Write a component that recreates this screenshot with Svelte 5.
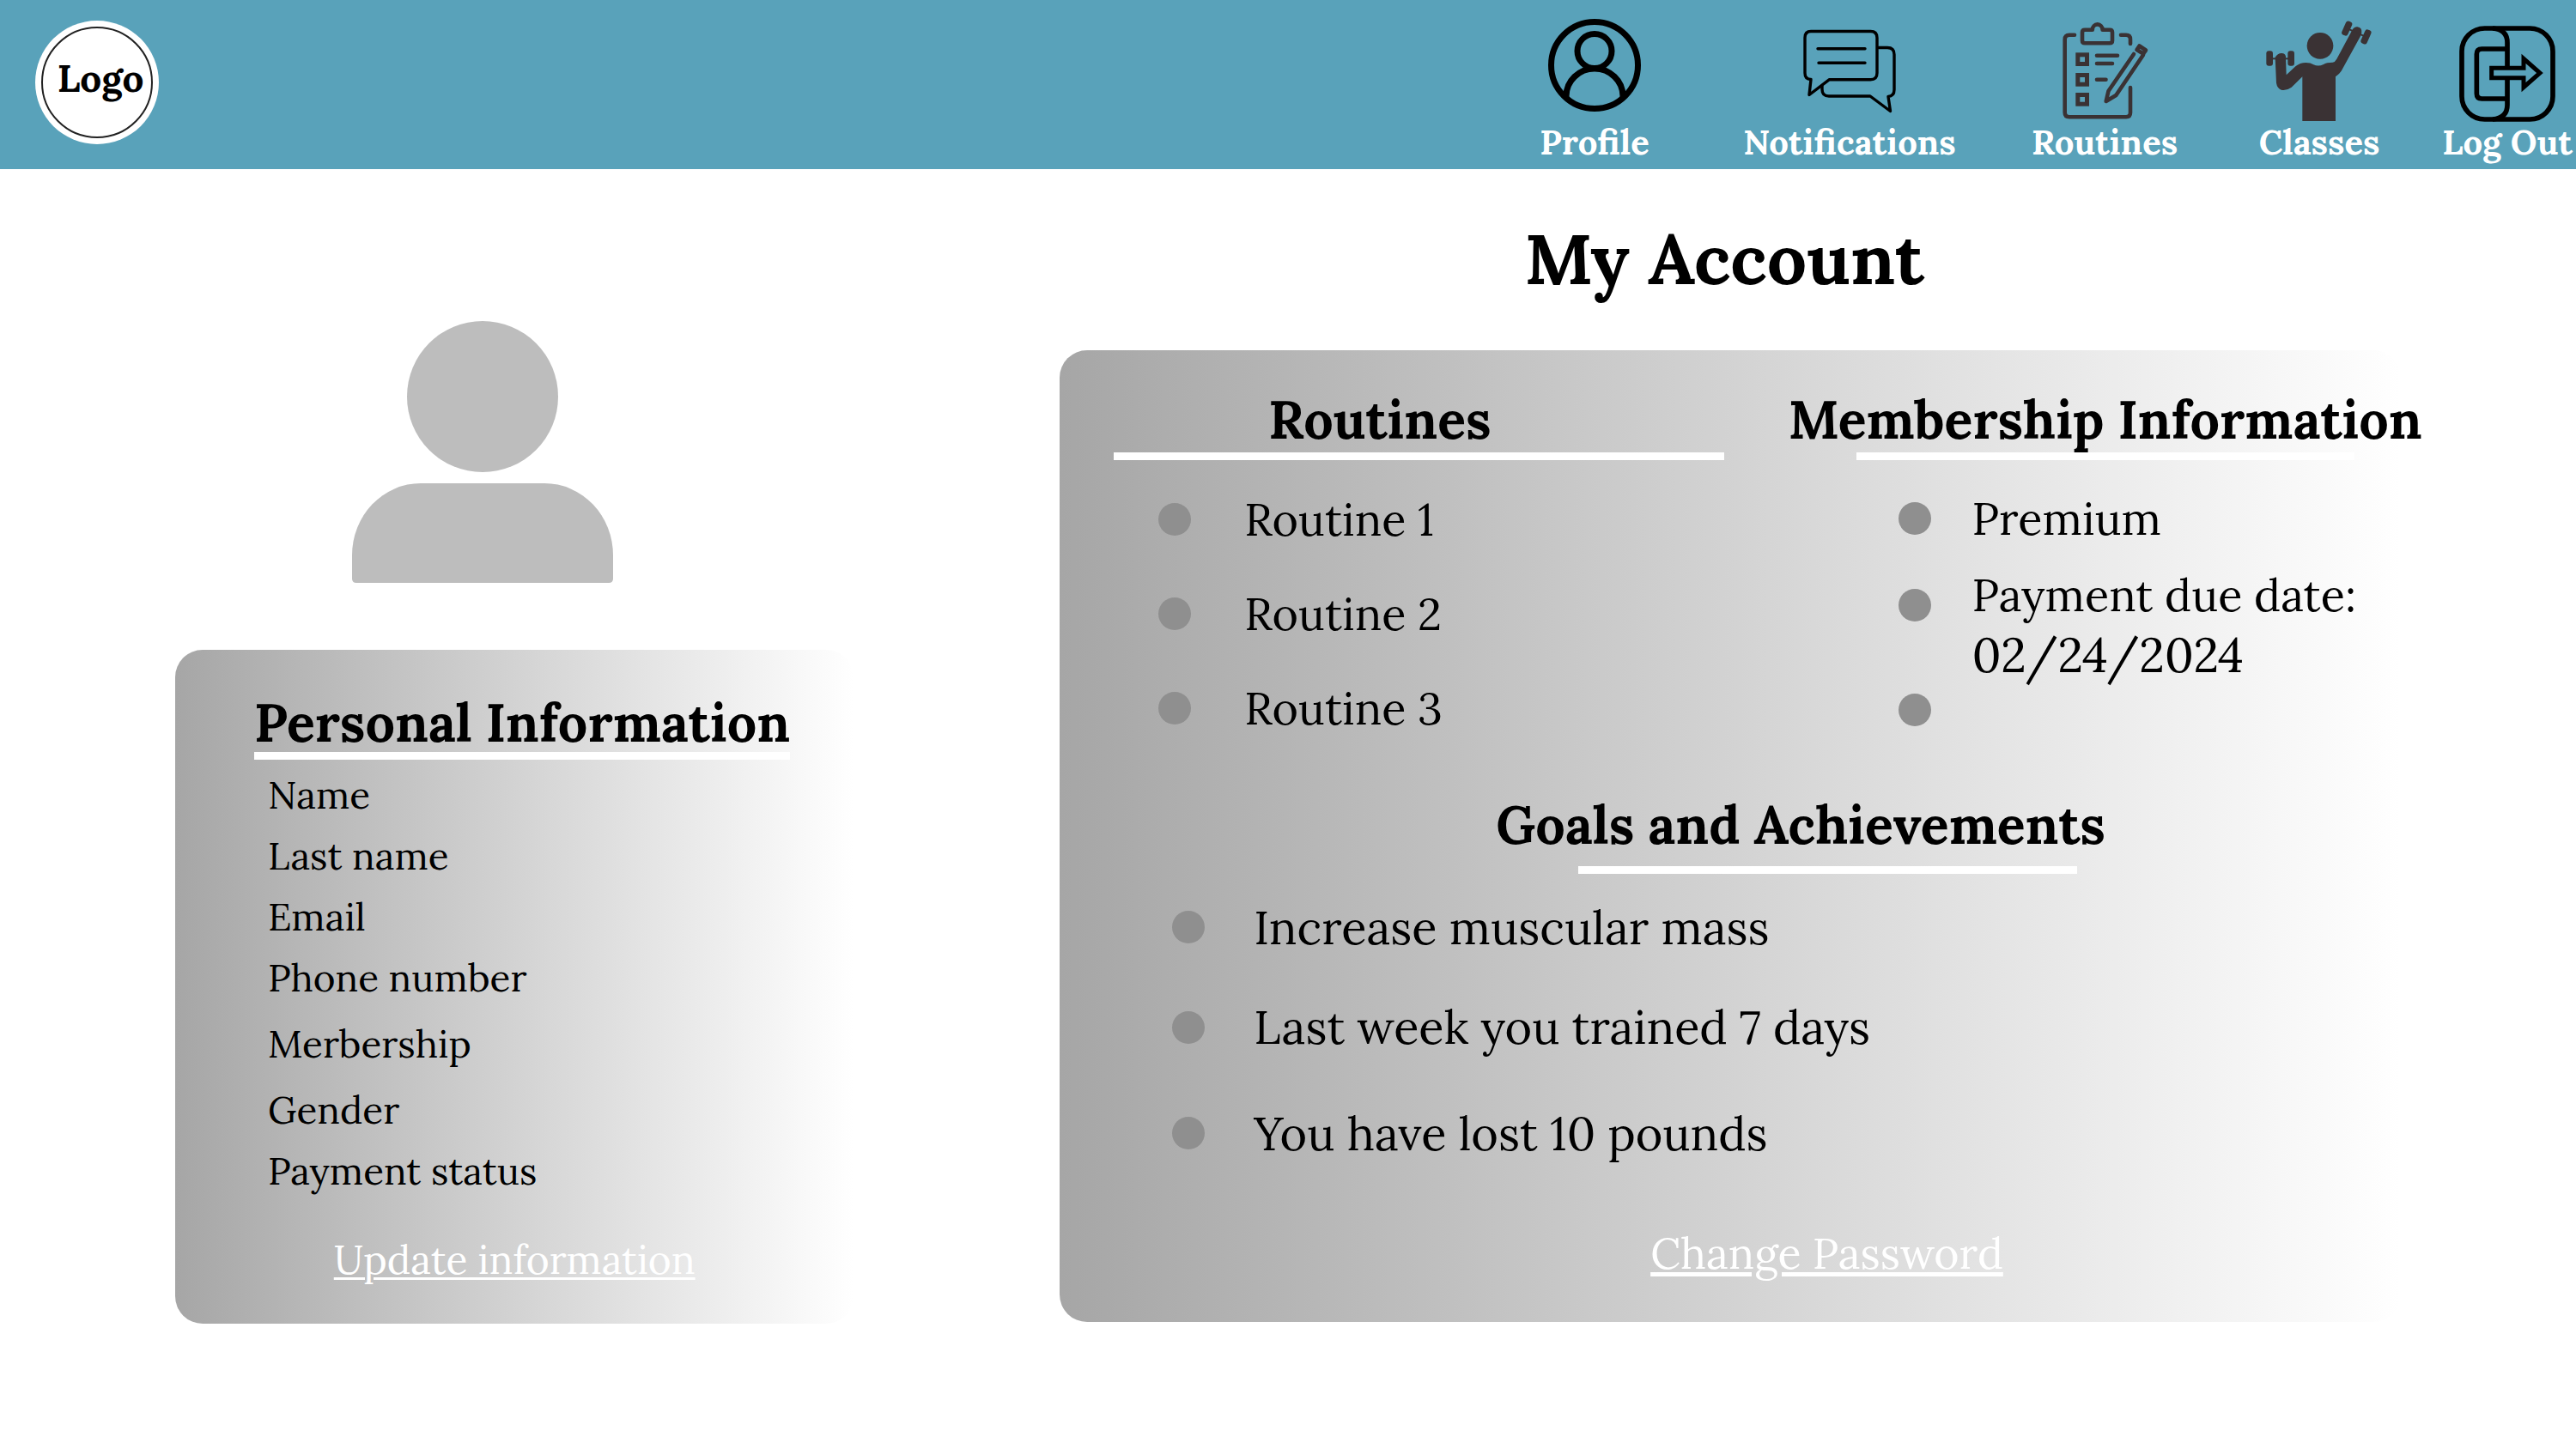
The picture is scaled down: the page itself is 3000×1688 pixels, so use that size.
<script>
  const personalFields = [
    { label: 'Name' },
    { label: 'Last name' },
    { label: 'Email' },
    { label: 'Phone number' },
    { label: 'Merbership', roomy: true },
    { label: 'Gender', roomy: true },
    { label: 'Payment status' }
  ];
  const routines = ['Routine 1', 'Routine 2', 'Routine 3'];
  const goals = [
    'Increase muscular mass',
    'Last week you trained 7 days',
    'You have lost 10 pounds'
  ];
</script>

<header class="topbar">
  <a class="logo" href="#home"><span>Logo</span></a>

  <nav class="menu" aria-label="Main">
    <a href="#profile">
      <svg viewBox="0 0 130 120" fill="none" stroke="#000" stroke-width="7" aria-hidden="true">
        <circle cx="65" cy="54" r="50.5" />
        <circle cx="65" cy="37.5" r="20" />
        <path d="M32 93v-3a33 32 0 0 1 66 0v3" />
      </svg>
      <span>Profile</span>
    </a>
    <a href="#notifications">
      <svg viewBox="0 0 130 120" fill="none" stroke="#000" stroke-width="3.4" stroke-linecap="round" stroke-linejoin="round" aria-hidden="true">
        <path d="M20 14.5H89.500q7.500 0 7.500 7.500v41q0 7.700-7.500 7.700H41.500L18 88.500 20 70.500q-7 0-7-7.500V22q0-7.500 7-7.500z" />
        <path d="M28 34.700H83M29 51.300H83" />
        <path d="M99 33.500h10q8 0 8 8v41q0 7.500-7 8l2.500 17L89 90H41q-8 0-8-8v-4" />
      </svg>
      <span>Notifications</span>
    </a>
    <a href="#routines">
      <svg viewBox="0 0 130 120" fill="none" stroke="#3a3234" stroke-width="4.600" stroke-linecap="round" stroke-linejoin="round" aria-hidden="true">
        <path d="M30 18.700H24q-5.300 0-5.300 5.300V109q0 5.300 5.300 5.300H90q5 0 5-5V80" />
        <path d="M84 18.700h6q5 0 5 5V29" />
        <path d="M50.800 12.700H42q-3 0-3 3v9.600q0 3 3 3h29q3 0 3-3v-9.600q0-3-3-3h-8.400a5.900 6.300 0 0 0-11.800 0z" />
        <g stroke-width="5" stroke-linejoin="miter">
          <rect x="33.800" y="41.800" width="10.700" height="10.700" />
          <rect x="33.800" y="65.500" width="10.700" height="10.700" />
          <rect x="33.800" y="88.500" width="10.700" height="10.700" />
        </g>
        <path d="M56 42.700H80M56 52H74M56 70.700H66.500" />
        <path d="M99 41 69.500 84 66.700 96l11.600-7L110 42" />
        <path d="M105.500 31.500 113 36.500 110 40.500 102.500 36z" />
      </svg>
      <span>Routines</span>
    </a>
    <a href="#classes">
      <svg viewBox="110 66 390 360" fill="#3a3234" aria-hidden="true">
        <circle cx="308" cy="160" r="46" />
        <path d="M246 423V268L208 305Q190 318 172 314 158 308 155 290L151 200Q160 185 175 186 190 188 188 203L190 262 222 232Q238 219 258 219 275 219 285 226 302 234 320 225 330 218 352 218 360 217 366 206L415 115Q424 92 438 94 455 96 453 114 452 120 448 128L382 248Q374 260 362 268V423z" />
        <rect x="120" y="178" width="23" height="52" rx="9" />
        <rect x="195" y="178" width="23" height="52" rx="9" />
        <rect x="140" y="202" width="58" height="6" />
        <g transform="rotate(24 435 114)">
          <rect x="387" y="88" width="23" height="52" rx="9" />
          <rect x="460" y="88" width="23" height="52" rx="9" />
          <rect x="405" y="111" width="60" height="6" />
        </g>
      </svg>
      <span>Classes</span>
    </a>
    <a href="#logout">
      <svg viewBox="771 66 390 360" fill="none" stroke="#000" stroke-width="17" aria-hidden="true">
        <rect x="807" y="99" width="318" height="318" rx="80" />
        <path d="M915 99q51 4 51 50V237M966 272V367q0 46-51 50" />
        <path d="M966 171H877q-18 0-18 18V327q0 18 18 18H966" />
        <path d="M911 237.500H1023V205L1080 255 1023 305V272H911z" stroke-width="15" />
      </svg>
      <span>Log Out</span>
    </a>
  </nav>
</header>

<main class="page">
  <section class="profile">
    <svg class="avatar" viewBox="0 0 304 305" fill="#bdbdbd" role="img" aria-label="Profile picture">
      <circle cx="152" cy="88" r="88" />
      <path d="M80 189H224A80 84 0 0 1 304 273V300Q304 305 299 305H5Q0 305 0 300V273A80 84 0 0 1 80 189z" />
    </svg>

    <div class="card personal">
      <h2>Personal Information</h2>
      <ul class="fields">
        {#each personalFields as field}
          <li class:roomy={field.roomy}>{field.label}</li>
        {/each}
      </ul>
      <a class="update" href="#update">Update information</a>
    </div>
  </section>

  <section class="account">
    <h1>My Account</h1>

    <div class="card overview">
      <div class="columns">
        <section class="routines">
          <h2>Routines</h2>
          <ul class="bullets">
            {#each routines as routine}
              <li>{routine}</li>
            {/each}
          </ul>
        </section>

        <section class="membership">
          <h2>Membership Information</h2>
          <ul class="bullets">
            <li>Premium</li>
            <li>
              <div>
                Payment due date:
                <time datetime="2024-02-24">02/24/2024</time>
              </div>
            </li>
            <li></li>
          </ul>
        </section>
      </div>

      <section class="goals">
        <h2>Goals and Achievements</h2>
        <ul class="bullets">
          {#each goals as goal}
            <li>{goal}</li>
          {/each}
        </ul>
      </section>

      <a class="password" href="#password">Change Password</a>
    </div>
  </section>
</main>

<style>
  :global(body) {
    margin: 0;
    background: #fff;
    color: #000;
    font-family: Lora, 'Liberation Serif', serif;
  }

  h1,
  h2,
  ul {
    margin: 0;
    padding: 0;
  }

  ul {
    list-style: none;
  }

  .topbar {
    display: flex;
    justify-content: space-between;
    align-items: flex-start;
    background: #59a2ba;
  }

  .logo {
    display: flex;
    box-sizing: border-box;
    width: 144px;
    height: 144px;
    margin: 24px 0 0 41px;
    padding: 7px;
    border-radius: 50%;
    background: #fff;
    color: #000;
    font-size: 44px;
    font-weight: 700;
    line-height: 52px;
    text-decoration: none;
  }

  .logo span {
    display: flex;
    flex: 1;
    align-items: center;
    justify-content: center;
    padding: 0 0 10px 8px;
    border: 2px solid #222;
    border-radius: 50%;
  }

  .menu {
    display: grid;
    grid-template-columns: 222fr 372fr 222fr 278fr 160fr;
    width: 41.8%;
    padding: 22px 0 7px;
  }

  .menu a {
    display: flex;
    flex-direction: column;
    align-items: center;
    color: #fff;
    font-size: 40px;
    font-weight: 700;
    line-height: 48px;
    text-decoration: none;
    white-space: nowrap;
  }

  .menu svg {
    width: 130px;
    height: 120px;
  }

  .page {
    display: grid;
    grid-template-columns: minmax(0, 790fr) minmax(0, 1561fr);
    column-gap: 9.25%;
    align-items: start;
    padding: 0 6.8%;
  }

  .profile {
    padding-top: 177px;
  }

  .avatar {
    display: block;
    width: 304px;
    height: 305px;
    margin: 0 0 78px 26%;
  }

  .card {
    border-radius: 32px;
    background: linear-gradient(90deg, #a6a6a6, #fff);
  }

  h1 {
    margin-bottom: 59px;
    padding-right: 14px;
    font-size: 82px;
    line-height: 96px;
    text-align: center;
  }

  h2 {
    font-size: 61px;
    line-height: 68px;
    white-space: nowrap;
  }

  h2::after {
    content: '';
    display: block;
    height: 9px;
    background: #fff;
  }

  .personal {
    display: flex;
    flex-direction: column;
    align-items: flex-start;
    padding: 51px 0 42px;
  }

  .personal h2 {
    margin-left: 92px;
  }

  .fields {
    padding: 6px 0 36px 108px;
    font-size: 44px;
    line-height: 71px;
  }

  .roomy {
    padding-top: 6px;
  }

  .update,
  .password {
    color: #fff;
    text-decoration: underline;
  }

  .update {
    align-self: center;
    font-size: 46px;
    line-height: 64px;
    text-decoration-thickness: 3px;
    text-underline-offset: 4px;
  }

  .account {
    padding-top: 56px;
  }

  .overview {
    padding: 47px 0 45px;
  }

  .columns {
    display: grid;
    grid-template-columns: minmax(0, 710fr) minmax(0, 740fr);
    column-gap: 74px;
    margin: 0 -26px 0 63px;
  }

  .bullets li {
    display: flex;
    align-items: center;
  }

  .bullets li::before {
    content: '';
    flex: none;
    width: 38px;
    height: 38px;
    border-radius: 50%;
    background: #8f8f8f;
  }

  .routines h2 {
    text-indent: 180px;
  }

  .routines h2::after,
  .membership h2::after {
    margin-top: 4px;
  }

  .routines .bullets {
    padding: 14px 0 0 52px;
    font-size: 52px;
  }

  .routines li {
    gap: 62px;
    height: 110px;
  }

  .membership h2 {
    text-align: center;
  }

  .membership h2::after {
    width: 580px;
    margin-inline: auto;
  }

  .membership .bullets {
    display: grid;
    grid-template-rows: 108px auto 58px;
    padding: 14px 0 0 129px;
    font-size: 52px;
    line-height: 70px;
  }

  .membership li {
    gap: 48px;
  }

  .membership li:nth-child(2) {
    align-items: flex-start;
  }

  .membership li:nth-child(2)::before {
    margin-top: 28px;
  }

  time {
    display: block;
    font-size: 55px;
  }

  .goals {
    padding-top: 47px;
  }

  .goals h2 {
    margin-left: 508px;
  }

  .goals h2::after {
    width: 581px;
    margin: 14px 0 0 96px;
  }

  .goals .bullets {
    display: grid;
    grid-template-rows: 116px 117px 130px;
    padding: 4px 0 0 131px;
    font-size: 54px;
  }

  .goals li {
    gap: 57px;
  }

  .password {
    display: block;
    width: max-content;
    margin: 40px 0 0 688px;
    font-size: 50px;
    line-height: 70px;
    text-decoration-thickness: 5px;
    text-underline-offset: 4px;
  }
</style>
